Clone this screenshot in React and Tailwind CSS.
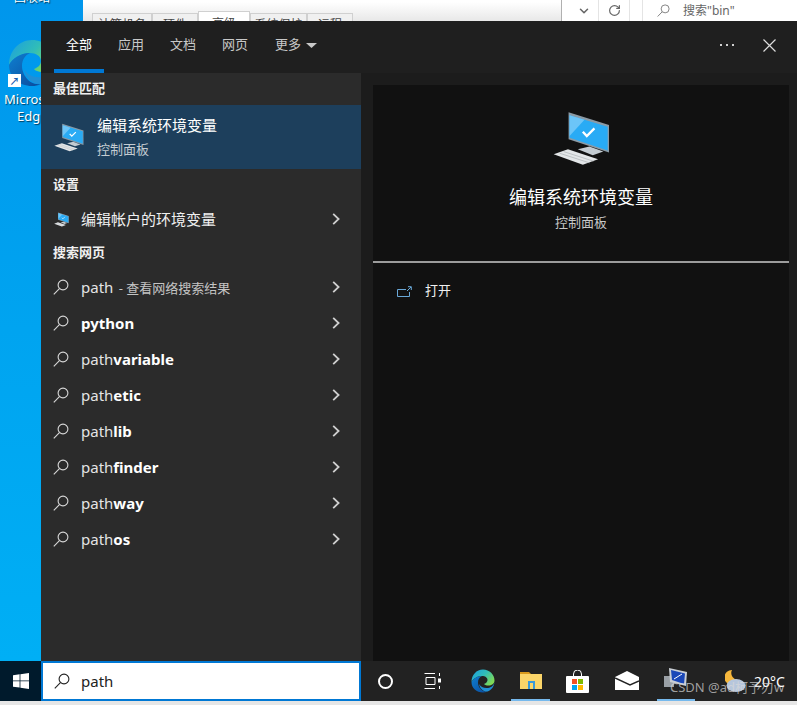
import { ChevronDown, RotateCw } from 'lucide-react'

const font = { fontFamily: '"Noto Sans", "Noto Sans CJK SC", sans-serif' }

const tabs = ['全部', '应用', '文档', '网页']

const dialogTabs = [
  { name: '计算机名', width: 'w-[60px]' },
  { name: '硬件', width: 'w-[46px]' },
  { name: '高级', width: 'w-[52px]', active: true },
  { name: '系统保护', width: 'w-[57px]' },
  { name: '远程', width: 'w-[46px]' },
]

const webRows = [
  { plain: 'path', hint: ' - 查看网络搜索结果' },
  { bold: 'python' },
  { plain: 'path', bold: 'variable' },
  { plain: 'path', bold: 'etic' },
  { plain: 'path', bold: 'lib' },
  { plain: 'path', bold: 'finder' },
  { plain: 'path', bold: 'way' },
  { plain: 'path', bold: 'os' },
]

function SearchIcon({ className, color = '#d8d8d8' }) {
  return (
    <svg className={className} viewBox="0 0 16 16" fill="none" stroke={color} strokeWidth="1.1">
      <circle cx="10" cy="6" r="4.9" />
      <path d="M6.4 9.6 L0.8 15.4" />
    </svg>
  )
}

function Chevron() {
  return (
    <svg className="h-3 w-2 shrink-0" viewBox="0 0 8 12" fill="none" stroke="#cfcfcf" strokeWidth="1.8">
      <path d="M1.2 0.8 L6.6 6 L1.2 11.2" />
    </svg>
  )
}

function MonitorIcon({ className }) {
  return (
    <svg className={className} viewBox="0 0 172 165">
      <polygon points="47,3 169,42 169,125 47,85" fill="#8b9aa5" />
      <polygon points="50,12 165,47 165,119 50,80" fill="#29abf5" />
      <polygon points="50,12 95,26 50,75" fill="#6cc5f8" />
      <path d="M90 62 L102 75 L125 52" fill="none" stroke="#fff" strokeWidth="7" />
      <polygon points="75,115 110,107 152,122 120,133" fill="#c4ccd2" />
      <polygon points="2,130 45,115 136,145 90,162" fill="#e3e6e8" />
      <path d="M20 127 L110 156 M32 122 L122 151" stroke="#a8aeb2" strokeWidth="2" />
    </svg>
  )
}

function EdgeIcon({ className, id }) {
  return (
    <svg className={className} viewBox="0 0 24 24">
      <defs>
        <linearGradient id={`${id}Top`} x1="0" y1="0" x2="1" y2="0.6">
          <stop offset="0" stopColor="#1b9de2" />
          <stop offset="0.55" stopColor="#30bdb8" />
          <stop offset="1" stopColor="#7ed957" />
        </linearGradient>
        <linearGradient id={`${id}Low`} x1="0" y1="0" x2="1" y2="1">
          <stop offset="0" stopColor="#0f7fd0" />
          <stop offset="1" stopColor="#0a4a9c" />
        </linearGradient>
      </defs>
      <path d="M12 0.5 C18.5 0.5 23.5 5.5 23.5 11.5 C23.5 15 20.5 16.5 17.5 16.5 C15 16.5 13.5 15.8 13 15 C15.5 14 16.5 12.5 16.5 11 C16.5 8.5 14 7 11 7 C6 7 2 10 0.5 13 C0.5 6 5.5 0.5 12 0.5 Z" fill={`url(#${id}Top)`} />
      <path d="M0.5 13 C2 10 6 7 11 7 C8.5 8 7 10.5 7 13.5 C7 18 11 23.5 16.5 22.5 C15 23.2 13.5 23.5 12 23.5 C5.5 23.5 0.5 19 0.5 13 Z" fill={`url(#${id}Low)`} />
      <path d="M23.5 13 C23 18 20 21.5 16.5 22.5 C12.5 23 8.5 19.5 8.2 15 C9.5 18 13 19.5 17 19 C20.5 18.5 23 16 23.5 13 Z" fill="#1f8fd6" />
    </svg>
  )
}

function WebRow({ row }) {
  return (
    <div className="flex h-9 items-center pl-3 pr-[21px]">
      <SearchIcon className="h-4 w-4 shrink-0" />
      <div className="ml-3 flex-1 whitespace-pre text-[15px] text-[#e4e4e4]">
        {row.plain}
        {row.bold && <span className="font-bold text-white">{row.bold}</span>}
        {row.hint && <span className="pl-[2px] text-[13px] text-[#c4c4c4]">{row.hint}</span>}
      </div>
      <Chevron />
    </div>
  )
}

function ResultsColumn() {
  return (
    <div className="flex w-[320px] shrink-0 flex-col bg-[#2b2b2b]">
      <div className="flex h-8 items-center px-3 text-[13px] font-bold text-[#f0f0f0]">最佳匹配</div>
      <div className="flex h-16 items-center bg-[#1d3f5c] pl-[13px]">
        <MonitorIcon className="h-[29px] w-[30px]" />
        <div className="ml-[13px]">
          <div className="text-[15px] leading-5 text-white">编辑系统环境变量</div>
          <div className="mt-1 text-[13px] leading-5 text-[#c4ccd2]">控制面板</div>
        </div>
      </div>
      <div className="flex h-8 items-center px-3 text-[13px] font-bold text-[#f0f0f0]">设置</div>
      <div className="flex h-9 items-center pl-[13px] pr-[21px]">
        <MonitorIcon className="h-[15px] w-[15px] shrink-0" />
        <div className="ml-3 flex-1 text-[15px] text-[#f0f0f0]">编辑帐户的环境变量</div>
        <Chevron />
      </div>
      <div className="flex h-8 items-center px-3 text-[13px] font-bold text-[#f0f0f0]">搜索网页</div>
      {webRows.map(row => (
        <WebRow key={(row.plain || '') + (row.bold || '')} row={row} />
      ))}
    </div>
  )
}

function PreviewColumn() {
  return (
    <div className="flex flex-1 bg-[#1c1c1c] pl-3 pr-2 pt-3">
      <div className="flex flex-1 flex-col bg-[#111111]">
        <div className="flex h-[176px] flex-col items-center pt-[26px]">
          <MonitorIcon className="h-[55px] w-[57px]" />
          <div className="mt-[17px] text-lg leading-7 text-white">编辑系统环境变量</div>
          <div className="mt-[1px] text-[13px] leading-5 text-[#c8c8c8]">控制面板</div>
        </div>
        <div className="h-0.5 bg-[#9c9c9c]" />
        <div className="flex h-[56px] items-center pl-6">
          <svg className="h-[11px] w-[15px]" viewBox="0 0 15 11" fill="none" stroke="#6aa8d8" strokeWidth="1">
            <path d="M9 3.5 H0.5 V10.5 H12.5 V6" />
            <path d="M10 5 L14 1 M11 0.7 H14.3 V4" />
          </svg>
          <span className="ml-[13px] text-[13px] text-[#f0f0f0]">打开</span>
        </div>
      </div>
    </div>
  )
}

function SearchPanel() {
  return (
    <div className="absolute left-[41px] top-[21px] flex h-[640px] w-[756px] flex-col">
      <div className="flex h-[52px] shrink-0 items-stretch gap-[2px] bg-[#1f1f1f] pl-[13px] pr-[21px]">
        {tabs.map((tab, i) => (
          <div
            key={tab}
            className={
              i === 0
                ? 'flex w-[50px] items-center justify-center border-b-4 border-[#0078d4] pb-0.5 pt-[1px] text-[13px] text-white'
                : 'flex w-[50px] items-center justify-center pb-1 text-[13px] text-[#c8c8c8]'
            }
          >
            {tab}
          </div>
        ))}
        <div className="ml-[9px] flex items-center pb-1 pl-1 text-[13px] text-[#c8c8c8]">
          更多
          <svg className="ml-[5px] h-[5px] w-[11px]" viewBox="0 0 11 5">
            <polygon points="0,0 11,0 5.5,5" fill="#c8c8c8" />
          </svg>
        </div>
        <div className="flex flex-1 items-center justify-end pb-1">
          <div className="flex gap-1">
            <div className="h-[2px] w-[2px] bg-[#d0d0d0]" />
            <div className="h-[2px] w-[2px] bg-[#d0d0d0]" />
            <div className="h-[2px] w-[2px] bg-[#d0d0d0]" />
          </div>
          <svg className="ml-[29px] h-[13px] w-[13px]" viewBox="0 0 13 13" fill="none" stroke="#dcdcdc" strokeWidth="1.2">
            <path d="M0.5 0.5 L12.5 12.5 M12.5 0.5 L0.5 12.5" />
          </svg>
        </div>
      </div>
      <div className="flex min-h-0 flex-1">
        <ResultsColumn />
        <PreviewColumn />
      </div>
    </div>
  )
}

function Backdrop() {
  return (
    <div className="flex h-[661px] shrink-0">
      <div className="relative w-[83px] shrink-0 bg-gradient-to-b from-[#0096ec] via-[#00a4f0] to-[#00aff5] text-[13px] text-white [text-shadow:1px_1px_1px_rgba(0,0,0,0.6)]">
        <div className="absolute left-[14px] top-[-11px] text-[12px]">回收站</div>
        <EdgeIcon id="desk" className="absolute left-[8px] top-[39px] h-[48px] w-[48px]" />
        <div className="absolute left-[8px] top-[74px] flex h-[13px] w-[13px] items-center justify-center bg-white text-[10px] font-bold leading-none text-[#1a5fb4] [text-shadow:none]">↗</div>
        <div className="absolute left-[4px] top-[90px]">Micros</div>
        <div className="absolute left-[17px] top-[107px]">Edg</div>
      </div>
      <div className="flex h-[21px] flex-1 bg-white">
        <div className="flex flex-1 items-end bg-gradient-to-b from-white from-10% to-[#e8e8e8] pl-[9px]">
          {dialogTabs.map(tab => (
            <div
              key={tab.name}
              className={
                tab.active
                  ? `h-[10px] overflow-hidden border border-b-0 border-[#d0d0d0] bg-white pt-[5px] text-center text-[12px] leading-[14px] text-[#444] ${tab.width}`
                  : `h-2 overflow-hidden border border-b-0 border-[#d0d0d0] bg-[#f0f0f0] pt-[4px] text-center text-[12px] leading-[14px] text-[#444] ${tab.width}`
              }
            >
              {tab.name}
            </div>
          ))}
          <div className="flex-1" />
        </div>
        <div className="flex w-[236px] shrink-0 items-center border-l border-[#b0b0b0] text-[#666]">
          <div className="flex h-full w-[37px] items-center justify-center border-r border-[#e4e4e4] pl-2">
            <ChevronDown className="h-[14px] w-[14px]" strokeWidth={2.6} />
          </div>
          <div className="flex h-full w-[31px] items-center justify-center border-r border-[#e4e4e4]">
            <RotateCw className="h-[13px] w-[13px]" strokeWidth={2.2} />
          </div>
          <div className="h-full w-[13px] border-r border-[#e4e4e4]" />
          <SearchIcon className="ml-[14px] h-[13px] w-[13px]" color="#777" />
          <span className="ml-[13px] text-[12px] text-[#666]">搜索"bin"</span>
        </div>
      </div>
    </div>
  )
}

function Taskbar() {
  return (
    <div className="relative flex h-10 shrink-0 items-stretch bg-[#222222]">
      <div className="flex w-[41px] shrink-0 items-center justify-center bg-[#001a2c]">
        <svg className="h-4 w-4" viewBox="0 0 16 16" fill="#fff">
          <polygon points="0,2.3 6.6,1.3 6.6,7.5 0,7.5" />
          <polygon points="7.4,1.2 16,0 16,7.5 7.4,7.5" />
          <polygon points="0,8.3 6.6,8.3 6.6,14.6 0,13.7" />
          <polygon points="7.4,8.3 16,8.3 16,16 7.4,14.8" />
        </svg>
      </div>
      <div className="flex w-[320px] shrink-0 items-center border-2 border-[#0078d4] bg-white pl-[11px]">
        <SearchIcon className="h-4 w-4" color="#222" />
        <span className="ml-[11px] text-[15px] text-[#222]">path</span>
      </div>
      <div className="flex w-12 items-center justify-center">
        <div className="h-[15px] w-[15px] rounded-full border-2 border-white" />
      </div>
      <div className="flex w-[46px] items-center justify-center">
        <svg className="h-4 w-[17px]" viewBox="0 0 17 16" fill="none" stroke="#fff" strokeWidth="1">
          <path d="M0.5 0.5 H11 M0.5 15.5 H11 M2 4.5 H11 V11.5 H2 Z" />
          <path d="M15.5 0 V3 M15.5 13 V16" />
          <rect x="14" y="5.5" width="3" height="4" fill="#fff" stroke="none" />
        </svg>
      </div>
      <div className="flex w-[56px] items-center justify-center">
        <EdgeIcon id="bar" className="h-6 w-6" />
      </div>
      <div className="flex w-[39px] items-center justify-center border-b-2 border-[#76b9ed] pt-0.5">
        <svg className="h-5 w-[22px]" viewBox="0 0 22 20">
          <path d="M0 1 H9 L11 3 H0 Z" fill="#d99a1c" />
          <rect y="3" width="22" height="15" fill="#fbd569" />
          <rect x="8" y="10" width="7" height="8" fill="#3a9ad9" />
          <rect x="10" y="12" width="3" height="6" fill="#fbd569" />
        </svg>
      </div>
      <div className="flex w-[55px] items-center justify-center">
        <svg className="h-[23px] w-[23px]" viewBox="0 0 23 23">
          <path d="M7.5 7 V4 A4 4 0 0 1 15.5 4 V7" fill="none" stroke="#fff" strokeWidth="1" />
          <rect y="6" width="23" height="17" rx="1" fill="#fff" />
          <rect x="6" y="9" width="5" height="5" fill="#f25022" />
          <rect x="12" y="9" width="5" height="5" fill="#7fba00" />
          <rect x="6" y="15" width="5" height="5" fill="#00a4ef" />
          <rect x="12" y="15" width="5" height="5" fill="#ffb900" />
        </svg>
      </div>
      <div className="flex w-[44px] items-center justify-center">
        <svg className="h-5 w-6" viewBox="0 0 24 20">
          <polygon points="0,6 12,0 24,6 24,19 0,19" fill="#fff" />
          <path d="M0 7 L15 14 L24 10" stroke="#222222" strokeWidth="1.4" fill="none" />
        </svg>
      </div>
      <div className="ml-[8px] flex w-[38px] items-center justify-center border-b-2 border-[#76b9ed] pb-1">
        <svg className="h-[22px] w-6" viewBox="0 0 24 22">
          <rect x="0" y="9" width="10" height="11" fill="#9aa0a6" />
          <polygon points="5,1 23,5 22,19 6,15" fill="#c9ced4" />
          <polygon points="7,3 21,6.5 20,17 8,13" fill="#1a47b8" />
          <path d="M10 12 L18 7" stroke="#fff" strokeWidth="1" />
        </svg>
      </div>
      <div className="ml-[29px] flex w-[22px] items-center justify-center">
        <svg className="h-[23px] w-[21px]" viewBox="0 0 21 23">
          <path d="M7 0 A7.5 7.5 0 1 0 14 10 A7 7 0 0 1 7 0 Z" fill="#f6b73c" />
          <ellipse cx="11" cy="15.5" rx="9.5" ry="6.5" fill="#b6c6dc" />
        </svg>
      </div>
      <div className="ml-[8px] flex items-center text-[14px] text-white">20°C</div>
      <div className="absolute left-[670px] top-[17px] whitespace-nowrap text-[13px] text-[#d8d8d8]/70">CSDN @ad柯予刃w</div>
    </div>
  )
}

export default function App() {
  return (
    <div className="relative flex h-[705px] w-[797px] flex-col overflow-hidden bg-[#e6e6e6]" style={font}>
      <Backdrop />
      <Taskbar />
      <SearchPanel />
    </div>
  )
}
